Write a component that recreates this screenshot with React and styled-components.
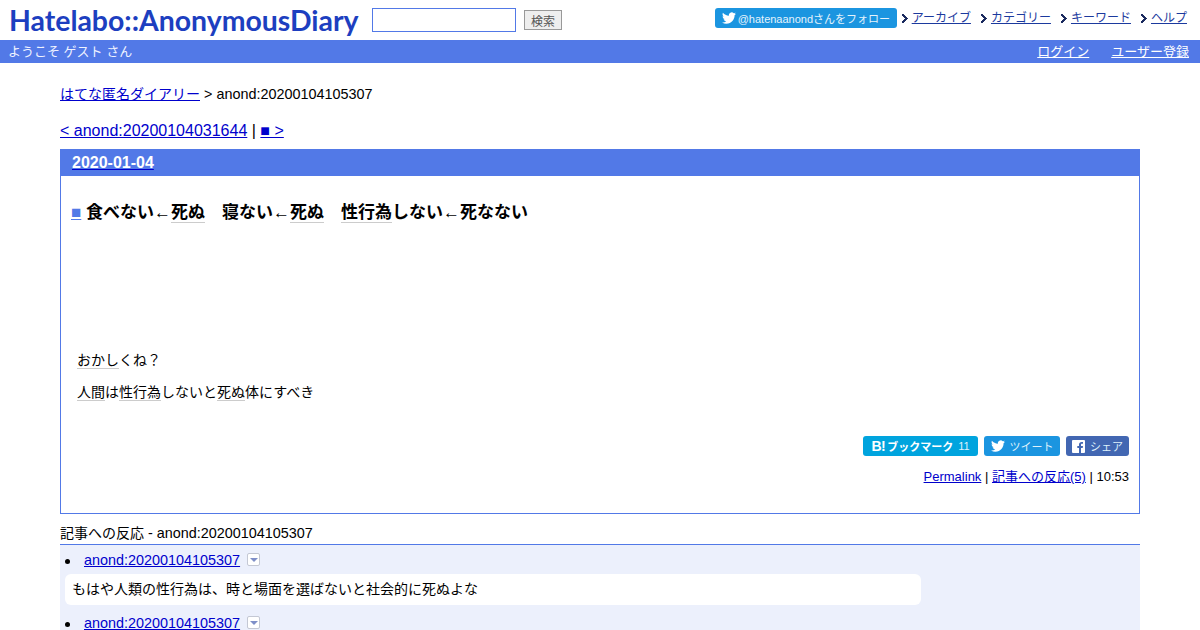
import React from 'react'
import styled, {createGlobalStyle} from 'styled-components'

const Global = createGlobalStyle`
    html, body {
        margin: 0;
        padding: 0;
        height: 630px;
        overflow: hidden;
        background: #fff;
        color: #000;
        font-family: "Liberation Sans", "Noto Sans CJK JP", sans-serif;
        font-size: 14.4px;
    }
    a {
        color: #0000cc;
    }
`

const Header = styled.div`
    display: flex;
    align-items: center;
    height: 40px;
    padding: 0 9px;
`
const Logo = styled.div`
    width: 351px;
    flex: none;
    overflow: visible;
    font-family: "Lato", sans-serif;
    font-weight: 700;
    font-size: 29px;
    line-height: 40px;
    color: #1d3fc0;
    white-space: nowrap;
    transform: scaleX(0.98);
    transform-origin: left center;
`
const SearchInput = styled.input`
    box-sizing: border-box;
    width: 144px;
    height: 24px;
    margin-left: 12px;
    border: 1px solid #5279e7;
    background: #fff;
    padding: 0;
`
const SearchButton = styled.button`
    box-sizing: border-box;
    width: 38px;
    height: 20px;
    margin-left: 8px;
    padding: 0;
    border: 1px solid #999;
    background: #eee;
    color: #555;
    font: 12px "Liberation Sans", "Noto Sans CJK JP", sans-serif;
`
const HeaderRight = styled.div`
    display: flex;
    align-items: center;
    margin-left: auto;
    margin-right: 4px;
    margin-top: -4px;
`
const FollowButton = styled.a`
    display: flex;
    align-items: center;
    gap: 2px;
    box-sizing: border-box;
    height: 20px;
    width: 182px;
    padding-left: 7px;
    margin-right: 5px;
    border-radius: 3px;
    background: #1b95e0;
    color: #e4f3fc;
    font-size: 11px;
    white-space: nowrap;
`
const NavLink = styled.a`
    display: flex;
    align-items: center;
    font-size: 12px;
    line-height: 16px;
    color: #1c3a9e;
    margin-left: ${({$first}) => ($first ? '0' : '10px')};
`
const Chevron = styled.svg`
    width: 6px;
    height: 9px;
    margin-right: 4px;
    flex: none;
`
const NavText = styled.span`
    text-decoration: underline;
`
const UserBar = styled.div`
    display: flex;
    justify-content: space-between;
    align-items: center;
    box-sizing: border-box;
    height: 23px;
    padding: 0 11px 2px 8px;
    background: #5279e7;
    color: #eef2ff;
    font-size: 13px;
`
const UserLinks = styled.div`
    display: flex;
    gap: 22px;
    a {
        color: #fff;
    }
`
const Main = styled.div`
    padding: 23px 60px 0;
`
const Breadcrumb = styled.div`
    line-height: 17px;
`
const Ja = styled.span`
    font-size: 14px;
`
const Pager = styled.div`
    margin-top: 18px;
    font-size: 16px;
    line-height: 20px;
`
const Section = styled.div`
    box-sizing: border-box;
    height: 365px;
    margin-top: 8px;
    border: 1px solid #5279e7;
    border-top: none;
`
const DateBar = styled.div`
    height: 27px;
    margin: 0 -1px;
    padding-left: 12px;
    background: #5279e7;
    font-size: 16px;
    font-weight: 700;
    line-height: 27px;
    span {
        color: #fff;
    }
`
const Title = styled.h3`
    margin: 25px 0 0 10px;
    font-size: 17px;
    font-weight: 700;
    line-height: 23px;
    a {
        color: #5279e7;
    }
`
const Keyword = styled.span`
    border-bottom: 1px solid #ccc;
`
const Body = styled.div`
    margin: 126px 0 0 16px;
    font-size: 14px;
    line-height: 20px;
    p {
        margin: 0 0 12px;
    }
`
const ShareRow = styled.div`
    display: flex;
    justify-content: flex-end;
    gap: 6px;
    margin: 34px 10px 0 0;
`
const ShareButton = styled.a`
    display: flex;
    align-items: center;
    justify-content: center;
    gap: 5px;
    box-sizing: border-box;
    width: ${({$w}) => $w}px;
    height: 20px;
    border-radius: 3px;
    background: ${({$bg}) => $bg};
    color: #dff1fb;
    font-size: 11px;
    white-space: nowrap;
`
const BookmarkLogo = styled.span`
    margin-right: -3px;
    color: #fff;
    font-size: 14px;
    font-weight: 700;
    letter-spacing: -0.5px;
`
const BookmarkLabel = styled.span`
    color: #fff;
    font-weight: 700;
`
const SectionFooter = styled.div`
    margin: 12px 10px 0 0;
    text-align: right;
    font-size: 13px;
    line-height: 17px;
`
const RefTitle = styled.div`
    height: 21px;
    margin-top: 9px;
    line-height: 20px;
    border-bottom: 1px solid #5279e7;
`
const RefList = styled.ul`
    margin: 0;
    padding: 0 0 20px;
    list-style: none;
    background: #ecf0fc;
`
const RefItem = styled.li`
    display: flex;
    flex-direction: column;
`
const RefHead = styled.div`
    display: flex;
    align-items: center;
    height: 29px;
    padding-left: 24px;
    position: relative;
    &::before {
        content: '';
        position: absolute;
        left: 5px;
        top: 14px;
        width: 5px;
        height: 5px;
        border-radius: 50%;
        background: #000;
    }
`
const Toggle = styled.span`
    display: flex;
    align-items: center;
    justify-content: center;
    box-sizing: border-box;
    width: 13px;
    height: 13px;
    margin-left: 7px;
    border: 1px solid #c4c8d4;
    border-radius: 2px;
    background: #fff;
    &::after {
        content: '';
        border-left: 4px solid transparent;
        border-right: 4px solid transparent;
        border-top: 4px solid #7f8fc8;
    }
`
const RefBody = styled.div`
    box-sizing: border-box;
    width: 856px;
    height: 31px;
    margin: 0 0 3px 5px;
    padding-left: 7px;
    border-radius: 6px;
    background: #fff;
    font-size: 14px;
    line-height: 31px;
`

const Bird = ({size = 14}) => (
    <svg width={size} height={size} viewBox="0 0 24 24" fill="#fff">
        <path d="M23.95 4.57a10 10 0 0 1-2.82.77 4.96 4.96 0 0 0 2.16-2.72c-.95.55-2 .96-3.13 1.2a4.92 4.92 0 0 0-8.38 4.48C7.69 8.1 4.07 6.13 1.64 3.16a4.82 4.82 0 0 0-.67 2.48c0 1.71.87 3.21 2.19 4.1a4.9 4.9 0 0 1-2.23-.62v.06a4.92 4.92 0 0 0 3.95 4.83 4.99 4.99 0 0 1-2.21.08 4.94 4.94 0 0 0 4.6 3.42A9.87 9.87 0 0 1 0 19.54a14 14 0 0 0 7.56 2.21c9.05 0 14-7.5 14-13.98 0-.21 0-.42-.02-.63a9.94 9.94 0 0 0 2.46-2.55l-.05-.02z" />
    </svg>
)

const NavItem = ({children, first}) => (
    <NavLink $first={first}>
        <Chevron viewBox="0 0 6 9">
            <path d="M0 0h2v1h1v1h1v1h1v1h1v1h-1v1h-1v1h-1v1h-1v1h-2v-2h1v-1h1v-1h1v-1h-1v-1h-1v-1h-1z" fill="#1a2a5e" />
        </Chevron>
        <NavText>{children}</NavText>
    </NavLink>
)

const Ref = ({children}) => (
    <RefItem>
        <RefHead>
            <a href="#r">anond:20200104105307</a>
            <Toggle />
        </RefHead>
        {children && <RefBody>{children}</RefBody>}
    </RefItem>
)

const App = () => (
    <>
        <Global />
        <Header>
            <Logo>Hatelabo::AnonymousDiary</Logo>
            <SearchInput />
            <SearchButton>検索</SearchButton>
            <HeaderRight>
                <FollowButton><Bird />@hatenaanondさんをフォロー</FollowButton>
                <NavItem first>アーカイブ</NavItem>
                <NavItem>カテゴリー</NavItem>
                <NavItem>キーワード</NavItem>
                <NavItem>ヘルプ</NavItem>
            </HeaderRight>
        </Header>
        <UserBar>
            <span>ようこそ ゲスト さん</span>
            <UserLinks>
                <a href="#login">ログイン</a>
                <a href="#register">ユーザー登録</a>
            </UserLinks>
        </UserBar>
        <Main>
            <Breadcrumb><a href="#top"><Ja>はてな匿名ダイアリー</Ja></a> &gt; anond:20200104105307</Breadcrumb>
            <Pager><a href="#prev">&lt; anond:20200104031644</a> | <a href="#next">■ &gt;</a></Pager>
            <Section>
                <DateBar><a href="#date"><span>2020-01-04</span></a></DateBar>
                <Title>
                    <a href="#p">■</a> 食べない←<Keyword>死ぬ</Keyword>　寝ない←<Keyword>死ぬ</Keyword>　<Keyword>性行為</Keyword>しない←死なない
                </Title>
                <Body>
                    <p><Keyword>おかし</Keyword>くね？</p>
                    <p><Keyword>人間</Keyword>は<Keyword>性行為</Keyword>しないと<Keyword>死ぬ</Keyword>体にすべき</p>
                </Body>
                <ShareRow>
                    <ShareButton $w={115} $bg="#00a4de">
                        <BookmarkLogo>B!</BookmarkLogo>
                        <BookmarkLabel>ブックマーク</BookmarkLabel>
                        11
                    </ShareButton>
                    <ShareButton $w={76} $bg="#1b95e0"><Bird />ツイート</ShareButton>
                    <ShareButton $w={63} $bg="#4267b2">
                        <svg width="13" height="13" viewBox="0 0 13 13">
                            <rect width="13" height="13" rx="1" fill="#fff" />
                            <path d="M9 13V8h1.700l.3-2H9V4.800c0-.6.2-1 1-1h1V2.100C10.800 2 10.200 2 9.600 2 8.100 2 7 2.900 7 4.600V6H5.300v2H7v5z" fill="#4267b2" />
                        </svg>
                        シェア
                    </ShareButton>
                </ShareRow>
                <SectionFooter>
                    <a href="#perma">Permalink</a> | <a href="#refs">記事への反応(5)</a> | 10:53
                </SectionFooter>
            </Section>
            <RefTitle><Ja>記事への反応</Ja> - anond:20200104105307</RefTitle>
            <RefList>
                <Ref>もはや人類の性行為は、時と場面を選ばないと社会的に死ぬよな</Ref>
                <Ref />
            </RefList>
        </Main>
    </>
)

export default App
